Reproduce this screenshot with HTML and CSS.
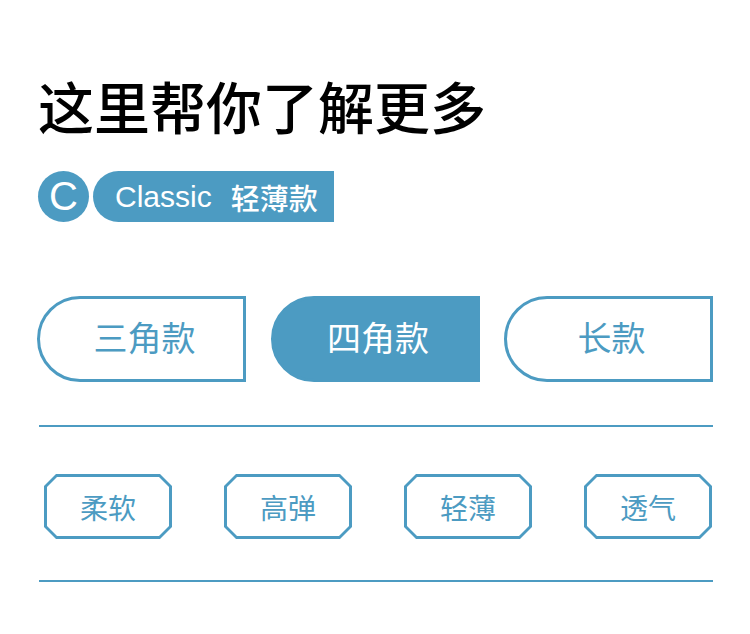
FILE: index.html
```html
<!DOCTYPE html>
<html lang="zh-CN">
<head>
  <meta charset="UTF-8">
  <title>这里帮你了解更多</title>
  <link rel="stylesheet" href="styles.css">
</head>
<body>

  <div class="pagina">
    <h1 class="titulo">这里帮你了解更多</h1>

    <div class="selo">
      <span class="selo-letra">C</span>
      <span class="selo-nome">Classic<span class="selo-tipo">轻薄款</span></span>
    </div>

    <div class="modelos">
      <button class="modelo">三角款</button>
      <button class="modelo ativo">四角款</button>
      <button class="modelo">长款</button>
    </div>

    <hr class="divisor">

    <ul class="tags">
      <li class="tag"><span class="tag-miolo">柔软</span></li>
      <li class="tag"><span class="tag-miolo">高弹</span></li>
      <li class="tag"><span class="tag-miolo">轻薄</span></li>
      <li class="tag"><span class="tag-miolo">透气</span></li>
    </ul>

    <hr class="divisor divisor-baixo">
  </div>

</body>
</html>
```

FILE: styles.css
```css
* { margin: 0; padding: 0; box-sizing: border-box; }

body {
  font-family: "Noto Sans CJK SC", sans-serif;
  background: #fff;
  color: #000;
}

.pagina {
  padding: 77px 37px 40px 37px;
}

.titulo {
  font-size: 56px;
  line-height: 56px;
  font-weight: 500;
  margin-left: 1px;
  color: #000;
}

.selo {
  display: flex;
  align-items: center;
  margin-top: 38px;
  margin-left: 1px;
  height: 51px;
}

.selo-letra {
  width: 51px;
  height: 51px;
  border-radius: 50%;
  background-color: #4c9bc2;
  color: white;
  font-family: "Liberation Sans", Arial, sans-serif;
  font-size: 40px;
  line-height: 51px;
  text-align: center;
}

.selo-nome {
  display: flex;
  align-items: center;
  margin-left: 4px;
  width: 241px;
  height: 51px;
  padding-left: 22px;
  border-radius: 26px 0 0 26px;
  background-color: #4c9bc2;
  color: white;
  font-family: "Liberation Sans", "Noto Sans CJK SC", sans-serif;
  font-size: 30px;
}

.selo-tipo {
  font-family: "Noto Sans CJK SC", sans-serif;
  font-size: 29px;
  font-weight: 500;
  margin-left: 19px;
}

.modelos {
  display: flex;
  justify-content: space-between;
  margin-top: 74px;
}

.modelo {
  width: 209px;
  height: 86px;
  border: 3px solid #4c9bc2;
  border-radius: 43px 0 0 43px;
  background-color: white;
  color: #4c9bc2;
  font-family: "Noto Sans CJK SC", sans-serif;
  font-size: 34px;
  font-weight: 400;
  padding: 0 0 5px 6px;
  cursor: pointer;
}

.modelo.ativo {
  background-color: #4c9bc2;
  color: white;
}

.divisor {
  border: none;
  height: 2px;
  background-color: #4c9bc2;
  margin: 43px 0 0 2px;
}

.tags {
  list-style: none;
  display: flex;
  gap: 52px;
  margin-top: 47px;
  padding-left: 7px;
}

.tag {
  width: 128px;
  height: 65px;
  padding: 3px;
  background-color: #4c9bc2;
  clip-path: polygon(12px 0, calc(100% - 12px) 0, 100% 12px, 100% calc(100% - 12px), calc(100% - 12px) 100%, 12px 100%, 0 calc(100% - 12px), 0 12px);
}

.tag-miolo {
  display: flex;
  align-items: center;
  justify-content: center;
  height: 100%;
  background-color: white;
  color: #4c9bc2;
  font-size: 28px;
  clip-path: polygon(10px 0, calc(100% - 10px) 0, 100% 10px, 100% calc(100% - 10px), calc(100% - 10px) 100%, 10px 100%, 0 calc(100% - 10px), 0 10px);
}

.divisor-baixo {
  margin-top: 41px;
}
```
